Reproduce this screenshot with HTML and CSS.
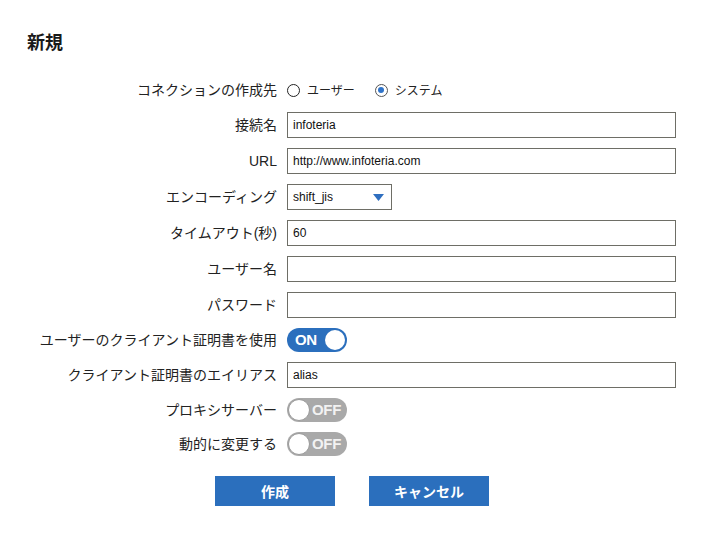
FILE: index.html
```html
<!DOCTYPE html>
<html lang="ja">
<head>
<meta charset="utf-8">
<title>新規</title>
<link rel="stylesheet" href="styles.css">
</head>
<body>
<h1 class="title">新規</h1>
<form class="form">
  <div class="label">コネクションの作成先</div>
  <div class="radios">
    <span class="radio"><span class="radio-dot"></span><span class="radio-text">ユーザー</span></span>
    <span class="radio checked"><span class="radio-dot"></span><span class="radio-text">システム</span></span>
  </div>

  <div class="label">接続名</div>
  <div class="field"><input class="input" type="text" value="infoteria"></div>

  <div class="label">URL</div>
  <div class="field"><input class="input" type="text" value="http://www.infoteria.com"></div>

  <div class="label">エンコーディング</div>
  <div class="field">
    <div class="select"><span class="select-text">shift_jis</span>
      <svg class="select-arrow" width="11" height="7" viewBox="0 0 11 7"><path d="M0 0H11L5.5 7Z" fill="#2f6fc0"/></svg>
    </div>
  </div>

  <div class="label">タイムアウト(秒)</div>
  <div class="field"><input class="input" type="text" value="60"></div>

  <div class="label">ユーザー名</div>
  <div class="field"><input class="input" type="text" value=""></div>

  <div class="label">パスワード</div>
  <div class="field"><input class="input" type="password" value=""></div>

  <div class="label">ユーザーのクライアント証明書を使用</div>
  <div class="field toggle-row"><span class="toggle on"><span class="toggle-text">ON</span><span class="knob"></span></span></div>

  <div class="label">クライアント証明書のエイリアス</div>
  <div class="field"><input class="input" type="text" value="alias"></div>

  <div class="label">プロキシサーバー</div>
  <div class="field toggle-row"><span class="toggle off"><span class="knob"></span><span class="toggle-text">OFF</span></span></div>

  <div class="label">動的に変更する</div>
  <div class="field toggle-row"><span class="toggle off"><span class="knob"></span><span class="toggle-text">OFF</span></span></div>
</form>
<div class="buttons">
  <button class="btn" type="button">作成</button>
  <button class="btn" type="button">キャンセル</button>
</div>
</body>
</html>
```
FILE: styles.css
```css
html, body {
  margin: 0;
  padding: 0;
  background: #fff;
}
body {
  width: 702px;
  font-family: "Liberation Sans", "Noto Sans CJK JP", sans-serif;
  color: #222;
}
.title {
  margin: 0;
  padding: 29px 0 0 27px;
  font-size: 18px;
  line-height: 24px;
  font-weight: bold;
  font-family: "Noto Sans CJK JP", sans-serif;
  color: #1a1a1a;
}
.form {
  display: grid;
  grid-template-columns: 277px 389px;
  grid-auto-rows: auto;
  column-gap: 10px;
  row-gap: 10px;
  margin-top: 25px;
}
.label {
  text-align: right;
  font-size: 14px;
  line-height: 20px;
  align-self: center;
  white-space: nowrap;
  color: #222;
}
.radios {
  display: flex;
  align-items: center;
  height: 24px;
  gap: 20px;
}
.radio {
  display: flex;
  align-items: center;
  gap: 7px;
}
.radio-dot {
  box-sizing: border-box;
  width: 13px;
  height: 13px;
  border-radius: 50%;
  border: 1px solid #222;
  background: #fff;
  display: flex;
  align-items: center;
  justify-content: center;
}
.radio.checked .radio-dot {
  border-color: #555;
}
.radio.checked .radio-dot::after {
  content: "";
  width: 6px;
  height: 6px;
  border-radius: 50%;
  background: #2f73c9;
}
.radio-text {
  font-size: 12px;
  line-height: 16px;
  font-family: "Noto Sans CJK JP", sans-serif;
  color: #222;
}
.field {
  display: flex;
  align-items: center;
}
.input {
  box-sizing: border-box;
  width: 389px;
  height: 26px;
  margin: 0;
  padding: 0 5px;
  border: 1px solid #6e6e66;
  border-radius: 0;
  font-family: "Liberation Sans", sans-serif;
  font-size: 12px;
  color: #111;
  background: #fff;
  outline: none;
}
.select {
  box-sizing: border-box;
  width: 105px;
  height: 26px;
  border: 1px solid #6e6e66;
  display: flex;
  align-items: center;
  justify-content: space-between;
  padding: 0 7px 0 5px;
  background: #fff;
}
.select-text {
  font-size: 12px;
  color: #111;
}
.select-arrow {
  display: block;
  margin-top: 1px;
}
.toggle-row {
  height: 24px;
}
.toggle {
  box-sizing: border-box;
  width: 60px;
  height: 24px;
  border-radius: 12px;
  display: flex;
  align-items: center;
  padding: 2px;
}
.toggle.on {
  background: #2b6fbd;
  justify-content: space-between;
  padding-left: 8px;
}
.toggle.off {
  background: #a9a9a9;
  padding-left: 1px;
}
.knob {
  width: 20px;
  height: 20px;
  border-radius: 50%;
  background: #fff;
  flex: none;
}
.toggle.off .knob {
  width: 20px;
  height: 20px;
  border: 1px solid #9a9a9a;
  box-sizing: content-box;
  margin-left: 0;
}
.toggle-text {
  font-family: "Liberation Sans", sans-serif;
  font-weight: bold;
  font-size: 15px;
  line-height: 18px;
  color: #fff;
  letter-spacing: -0.3px;
}
.toggle.off .toggle-text {
  color: #f2f2f2;
  margin-left: 2px;
}
.buttons {
  display: flex;
  justify-content: center;
  gap: 34px;
  margin-top: 20px;
  padding-left: 2px;
}
.btn {
  width: 120px;
  height: 30px;
  margin: 0;
  padding: 0;
  border: none;
  border-radius: 0;
  background: #2b6fbd;
  color: #fff;
  font-family: "Noto Sans CJK JP", sans-serif;
  font-weight: bold;
  font-size: 14px;
  line-height: 30px;
}
```
